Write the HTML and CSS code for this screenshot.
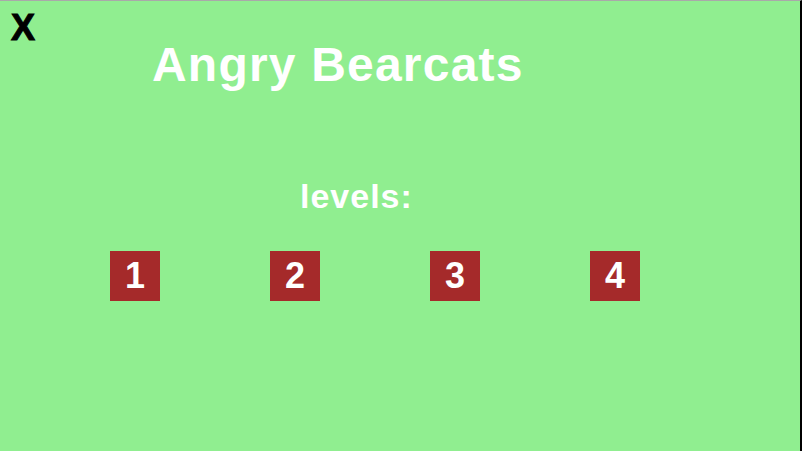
FILE: index.html
```html
<!DOCTYPE html>
<html>
<head>
<meta charset="utf-8">
<link rel="stylesheet" href="styles.css">
</head>
<body>
<div class="screen">
  <div class="close">X</div>
  <h1 class="title">Angry Bearcats</h1>
  <div class="levels-label">levels:</div>
  <div class="levels">
    <div class="level">1</div>
    <div class="level">2</div>
    <div class="level">3</div>
    <div class="level">4</div>
  </div>
</div>
</body>
</html>
```
FILE: styles.css
```css
html, body {
  margin: 0;
  padding: 0;
  background: #ffffff;
}
.screen {
  box-sizing: border-box;
  width: 802px;
  height: 451px;
  background: #90ee90;
  border-top: 1px solid #a9a9a9;
  border-right: 2px solid #000000;
  font-family: "Liberation Sans", Arial, sans-serif;
  font-weight: bold;
  display: flex;
  flex-direction: column;
  overflow: hidden;
}
.close {
  color: #000000;
  font-size: 36px;
  line-height: 36px;
  height: 36px;
  margin: 9px 0 0 11px;
  -webkit-text-stroke: 1px #000000;
}
.title {
  margin: 0 0 0 152px;
  color: #ffffff;
  font-size: 48px;
  line-height: 38px;
  letter-spacing: 1.2px;
  font-weight: bold;
}
.levels-label {
  margin: 95px 0 0 300px;
  color: #ffffff;
  font-size: 34px;
  line-height: 34px;
  letter-spacing: 1px;
}
.levels {
  display: flex;
  gap: 110px;
  margin: 38px 0 0 110px;
}
.level {
  width: 50px;
  height: 50px;
  background: #a52a2a;
  color: #ffffff;
  font-size: 36px;
  display: flex;
  align-items: center;
  justify-content: center;
}
```
